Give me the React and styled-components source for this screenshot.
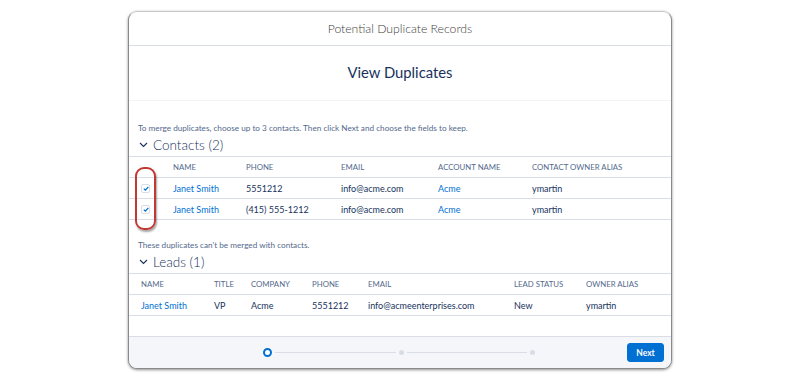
import React from "react";
import styled, { createGlobalStyle } from "styled-components";

const Global = createGlobalStyle`
  html, body { margin: 0; padding: 0; background: #fff; }
  body { font-family: Lato, "Open Sans", sans-serif; font-weight: 400; }
  * { box-sizing: border-box; }
`;

const Page = styled.div`
  width: 800px;
  height: 380px;
  padding-top: 11px;
  display: flex;
  justify-content: center;
  align-items: flex-start;
`;

const Modal = styled.div`
  width: 544px;
  height: 358px;
  border: 1px solid #8a8a8a;
  border-top-color: #c8c8c8;
  border-radius: 9px;
  box-shadow: 0 1px 3px rgba(0, 0, 0, 0.45);
  display: flex;
  flex-direction: column;
  overflow: hidden;
  background: #fff;
`;

const Header = styled.div`
  height: 34px;
  flex: none;
  display: flex;
  align-items: center;
  justify-content: center;
  border-bottom: 1px solid #d8dde6;
  font-size: 12.2px;
  font-weight: 300;
  color: #3e3e3c;
`;

const TitleBar = styled.div`
  height: 55px;
  flex: none;
  display: flex;
  align-items: center;
  justify-content: center;
  border-bottom: 1px solid #f3f4f6;
  font-size: 14.8px;
  font-weight: 400;
  color: #16325c;
  padding-bottom: 2px;
`;

const Body = styled.div`
  flex: 1;
  display: flex;
  flex-direction: column;
  padding-top: 21px;
`;

const Note = styled.div`
  font-size: 8.2px;
  color: #54698d;
  padding-left: 9px;
  height: 12px;
  line-height: 12px;
`;

const SectionTitle = styled.div`
  display: flex;
  align-items: center;
  gap: 5px;
  padding-left: 10px;
  height: 22px;
  font-size: 13.5px;
  font-weight: 300;
  color: #16325c;
`;

const Table = styled.div`
  display: grid;
  grid-template-columns: ${(p) => p.$cols};
  border-top: 1px solid #d8dde6;
  position: relative;
`;

const Cell = styled.div`
  height: 21px;
  display: flex;
  align-items: center;
  padding-left: ${(p) => p.$pl || 7}px;
  border-bottom: 1px solid #d8dde6;
  font-size: ${(p) => (p.$head ? "7.8px" : "9px")};
  color: ${(p) => (p.$head ? "#54698d" : p.$link ? "#0070d2" : "#16325c")};
  text-transform: ${(p) => (p.$head ? "uppercase" : "none")};
  white-space: nowrap;
`;

const Check = styled.span`
  width: 9px;
  height: 9px;
  border: 1px solid #d8dde6;
  border-radius: 2px;
  background: #fff;
  display: flex;
  align-items: center;
  justify-content: center;
`;

const Highlight = styled.div`
  position: absolute;
  left: 6px;
  top: 10px;
  width: 21px;
  height: 63px;
  border: 2px solid #c23934;
  border-radius: 9px;
  box-shadow: 1px 2px 2px rgba(0, 0, 0, 0.35);
  pointer-events: none;
`;

const Spacer = styled.div`
  height: ${(p) => p.$h}px;
  flex: none;
`;

const Footer = styled.div`
  height: 32px;
  flex: none;
  margin-top: auto;
  border-top: 1px solid #d8dde6;
  background: #f4f6f9;
  display: flex;
  align-items: center;
  padding: 0 7px 0 134px;
`;

const Progress = styled.div`
  width: 272px;
  display: flex;
  align-items: center;
`;

const Ring = styled.span`
  width: 9px;
  height: 9px;
  border-radius: 50%;
  border: 2.5px solid #0070d2;
  background: #fff;
  flex: none;
`;

const Line = styled.span`
  flex: 1;
  height: 1px;
  background: #d8dde6;
  margin: 0 3px;
`;

const Dot = styled.span`
  width: 5px;
  height: 5px;
  border-radius: 50%;
  background: #d8dde6;
  flex: none;
`;

const Button = styled.button`
  margin-left: auto;
  width: 37px;
  height: 19px;
  border: 1px solid #0070d2;
  background: #0070d2;
  border-radius: 3px;
  color: #fff;
  font-family: Lato, sans-serif;
  font-weight: 700;
  font-size: 8.5px;
  padding: 0;
`;

const Chevron = () => (
  <svg width="9" height="6" viewBox="0 0 9 6">
    <path d="M1 1l3.5 3.5L8 1" fill="none" stroke="#16325c" strokeWidth="1.1" />
  </svg>
);

const Tick = () => (
  <svg width="6" height="5" viewBox="0 0 6 5">
    <path d="M0.8 2.6l1.6 1.5L5.3 0.9" fill="none" stroke="#0070d2" strokeWidth="1.3" />
  </svg>
);

const contactCols = "37px 73px 95px 97px 94px 1fr";
const leadCols = "78px 37px 61px 56px 146px 72px 1fr";

const contacts = [
  ["Janet Smith", "5551212", "info@acme.com", "Acme", "ymartin"],
  ["Janet Smith", "(415) 555-1212", "info@acme.com", "Acme", "ymartin"],
];

export default function App() {
  return (
    <Page>
      <Global />
      <Modal>
        <Header>Potential Duplicate Records</Header>
        <TitleBar>View Duplicates</TitleBar>
        <Body>
          <Note>To merge duplicates, choose up to 3 contacts. Then click Next and choose the fields to keep.</Note>
          <SectionTitle>
            <Chevron />
            Contacts (2)
          </SectionTitle>
          <Table $cols={contactCols}>
            <Cell $head />
            {["Name", "Phone", "Email", "Account Name", "Contact Owner Alias"].map((h) => (
              <Cell $head key={h}>{h}</Cell>
            ))}
            {contacts.map((r, i) => (
              <React.Fragment key={i}>
                <Cell $pl={12}>
                  <Check>
                    <Tick />
                  </Check>
                </Cell>
                <Cell $link>{r[0]}</Cell>
                <Cell>{r[1]}</Cell>
                <Cell>{r[2]}</Cell>
                <Cell $link>{r[3]}</Cell>
                <Cell>{r[4]}</Cell>
              </React.Fragment>
            ))}
            <Highlight />
          </Table>
          <Spacer $h={19} />
          <Note>These duplicates can't be merged with contacts.</Note>
          <SectionTitle>
            <Chevron />
            Leads (1)
          </SectionTitle>
          <Table $cols={leadCols}>
            {["Name", "Title", "Company", "Phone", "Email", "Lead Status", "Owner Alias"].map((h, i) => (
              <Cell $head key={h} $pl={i === 0 ? 12 : 7}>{h}</Cell>
            ))}
            <Cell $link $pl={12}>Janet Smith</Cell>
            <Cell>VP</Cell>
            <Cell>Acme</Cell>
            <Cell>5551212</Cell>
            <Cell>info@acmeenterprises.com</Cell>
            <Cell>New</Cell>
            <Cell>ymartin</Cell>
          </Table>
        </Body>
        <Footer>
          <Progress>
            <Ring />
            <Line />
            <Dot />
            <Line />
            <Dot />
          </Progress>
          <Button>Next</Button>
        </Footer>
      </Modal>
    </Page>
  );
}
